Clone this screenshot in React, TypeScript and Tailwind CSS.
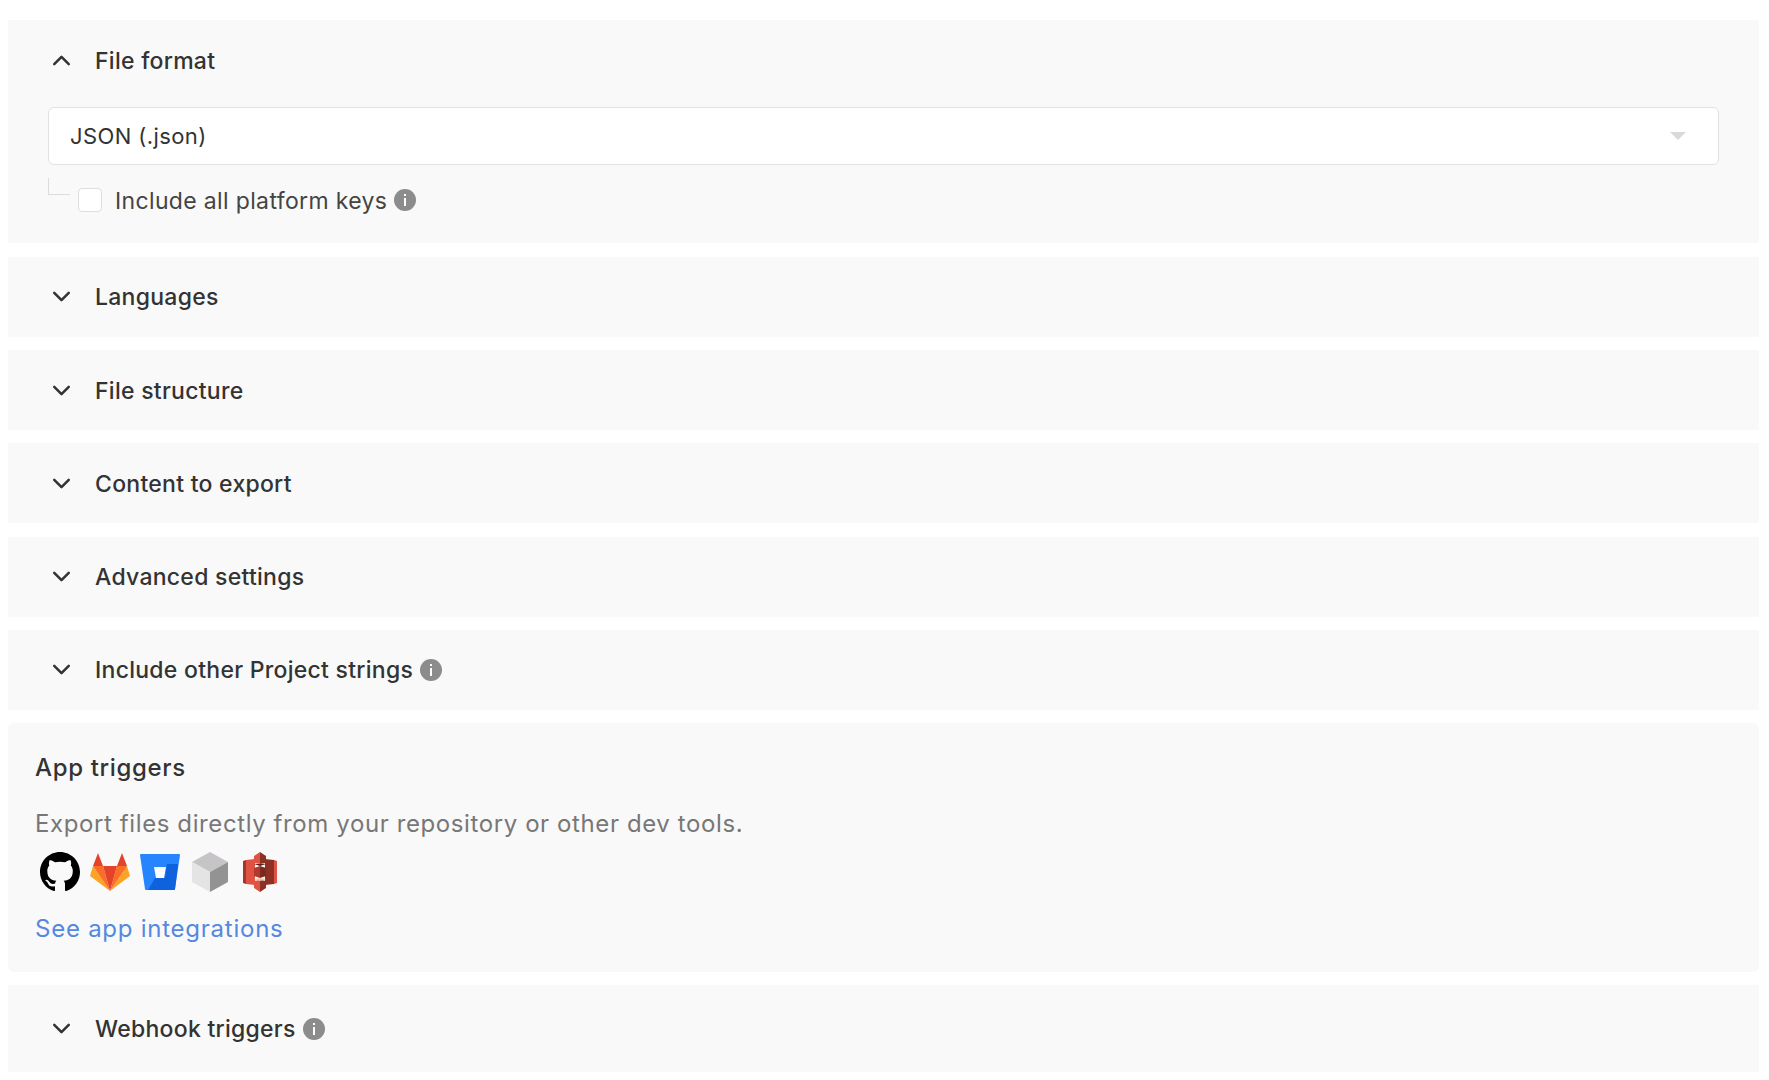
import { ChevronDown, ChevronUp } from 'lucide-react';

const FONT = "font-['Inter',sans-serif]";

function InfoDot() {
  return (
    <span className="ml-[7px] flex h-[22px] w-[22px] shrink-0 items-center justify-center rounded-full bg-[#8c8c8c]">
      <svg width="4" height="12" viewBox="0 0 4 12" fill="#fff">
        <rect x="1" y="0" width="2" height="2" />
        <rect x="1" y="4" width="2" height="8" />
      </svg>
    </span>
  );
}

function Section({ title, info, tall }: { title: string; info?: boolean; tall?: boolean }) {
  return (
    <section className={`flex items-center bg-[#f9f9f9] pl-[38.5px] ${tall ? 'h-[87px]' : 'h-[80px]'}`}>
      <ChevronDown className="h-[29px] w-[29px] text-[#333333]" strokeWidth={2.1} />
      <h3 className="mt-[1px] ml-[19.5px] text-[23px] leading-[32px] font-medium tracking-[0.27px] text-[#333333]">{title}</h3>
      {info && <InfoDot />}
    </section>
  );
}

function GithubIcon() {
  return (
    <svg width="40" height="40" viewBox="0 0 16 16" fill="#000">
      <path d="M8 0C3.58 0 0 3.58 0 8c0 3.54 2.29 6.53 5.47 7.59.4.07.55-.17.55-.38 0-.19-.01-.82-.01-1.49-2.01.37-2.53-.49-2.69-.94-.09-.23-.48-.94-.82-1.13-.28-.15-.68-.52-.01-.53.63-.01 1.08.58 1.23.82.72 1.21 1.87.87 2.33.66.07-.52.28-.87.51-1.07-1.78-.2-3.64-.89-3.64-3.95 0-.87.31-1.59.82-2.15-.08-.2-.36-1.02.08-2.12 0 0 .67-.21 2.2.82.64-.18 1.32-.27 2-.27s1.36.09 2 .27c1.53-1.04 2.2-.82 2.2-.82.44 1.1.16 1.92.08 2.12.51.56.82 1.27.82 2.15 0 3.07-1.87 3.75-3.65 3.95.29.25.54.73.54 1.48 0 1.07-.01 1.93-.01 2.2 0 .21.15.46.55.38A8.01 8.01 0 0 0 16 8c0-4.42-3.58-8-8-8z" />
    </svg>
  );
}

function GitlabIcon() {
  return (
    <svg width="40" height="38" viewBox="0 0 40 38">
      <path d="M20 38 0 23l3-10z" fill="#fca326" />
      <path d="M20 38 40 23l-3-10z" fill="#fca326" />
      <path d="M20 38 3 13h10z" fill="#fc6d26" />
      <path d="M20 38 37 13H27z" fill="#fc6d26" />
      <path d="M20 38 13 13h14z" fill="#e24329" />
      <path d="M3 13 8 0l5 13z" fill="#e24329" />
      <path d="M37 13 32 0l-5 13z" fill="#e24329" />
    </svg>
  );
}

function BitbucketIcon() {
  return (
    <svg width="40" height="36" viewBox="0 0 40 36">
      <path d="M1 0h38a1 1 0 0 1 1 1l-5 34a1 1 0 0 1-1 1H6a1 1 0 0 1-1-1L0 1a1 1 0 0 1 1-1z" fill="#2684ff" />
      <path d="M38 10H27l-2 14H15l-7 12h26a1 1 0 0 0 1-1z" fill="#0f62dd" />
      <path d="M14 13h12l-2 11h-8z" fill="#fff" />
    </svg>
  );
}

function BoxIcon() {
  return (
    <svg width="38" height="40" viewBox="0 0 38 40">
      <path d="M19 0 37 10 19 20 1 10z" fill="#c6c4c6" />
      <path d="M1 10 19 20V40L1 30z" fill="#e4e4e4" />
      <path d="M37 10 19 20V40L37 30z" fill="#939393" />
    </svg>
  );
}

function S3Icon() {
  return (
    <svg width="34" height="40" viewBox="0 0 34 40">
      <path d="M0 9l3-1v24l-3-1z" fill="#9e3a2d" />
      <path d="M3 8l9-1v26l-9-1z" fill="#e05243" />
      <path d="M31 8l-9-1v26l9-1z" fill="#8c3123" />
      <path d="M34 9l-3-1v24l3-1z" fill="#e05243" />
      <path d="M11 4l6-4v12l-6-1z" fill="#e05243" />
      <path d="M23 4l-6-4v12l6-1z" fill="#8c3123" />
      <path d="M11 16l6-2v12l-6-2z" fill="#b13a2c" />
      <path d="M23 16l-6-2v12l6-2z" fill="#7a2a1f" />
      <path d="M11 29l6-1v12l-6-4z" fill="#e05243" />
      <path d="M23 29l-6-1v12l6-4z" fill="#8c3123" />
      <path d="M11 12l12 0-6 2z" fill="#5e1f18" />
      <path d="M11 27l6-1 6 1-6 2z" fill="#f2c4a0" />
    </svg>
  );
}

export default function App() {
  return (
    <div className={`${FONT} flex min-h-[1080px] flex-col gap-[13.2px] bg-white pt-[20px] pr-[10px] pl-[8px]`}>
      <section className="mb-[0.8px] flex h-[223px] flex-col bg-[#f9f9f9] px-[40px]">
        <div className="flex h-[80px] shrink-0 items-center">
          <ChevronUp className="-ml-[1.5px] h-[29px] w-[29px] text-[#333333]" strokeWidth={2.1} />
          <h3 className="mt-[1px] ml-[19.5px] text-[23px] leading-[32px] font-medium tracking-[0.27px] text-[#333333]">File format</h3>
        </div>
        <div className="mt-[7px] flex h-[58px] shrink-0 items-center justify-between rounded-[6px] border border-[#e1e1e1] bg-white pr-[32px] pl-[21px]">
          <span className="mt-[1px] text-[22px] tracking-[0.4px] text-[#333333]">JSON (.json)</span>
          <span className="h-0 w-0 border-x-[8px] border-t-[8px] border-x-transparent border-t-[#d9d9d9]" />
        </div>
        <div className="mt-[13px] flex items-start">
          <span className="h-[17px] w-[22px] border-b border-l border-[#dcdcdc]" />
          <div className="mt-[10px] ml-[8px] flex h-[24px] items-center">
            <span className="h-[24px] w-[24px] rounded-[4px] border border-[#dddddd] bg-white" />
            <span className="mt-[1px] ml-[13px] text-[23px] leading-[24px] tracking-[0.35px] text-[#444444]">Include all platform keys</span>
            <InfoDot />
          </div>
        </div>
      </section>

      <Section title="Languages" />
      <Section title="File structure" />
      <Section title="Content to export" />
      <Section title="Advanced settings" />
      <Section title="Include other Project strings" info />

      <section className="flex h-[249px] flex-col rounded-[6px] bg-[#f9f9f9] pt-[29px] pl-[27px]">
        <h3 className="text-[24px] leading-[32px] font-medium tracking-[0.65px] text-[#333333]">App triggers</h3>
        <p className="mt-[24px] text-[24px] leading-[32px] tracking-[0.6px] text-[#777777]">
          Export files directly from your repository or other dev tools.
        </p>
        <div className="mt-[12px] flex items-center gap-[10px] pl-[5px]">
          <span className="flex h-[40px] w-[40px] items-center justify-center"><GithubIcon /></span>
          <span className="flex h-[40px] w-[40px] items-center justify-center"><GitlabIcon /></span>
          <span className="flex h-[40px] w-[40px] items-center justify-center"><BitbucketIcon /></span>
          <span className="flex h-[40px] w-[40px] items-center justify-center"><BoxIcon /></span>
          <span className="flex h-[40px] w-[40px] items-center justify-center"><S3Icon /></span>
        </div>
        <a className="mt-[21px] text-[24px] leading-[32px] tracking-[0.75px] text-[#5588e0]">See app integrations</a>
      </section>

      <Section title="Webhook triggers" info tall />
    </div>
  );
}
